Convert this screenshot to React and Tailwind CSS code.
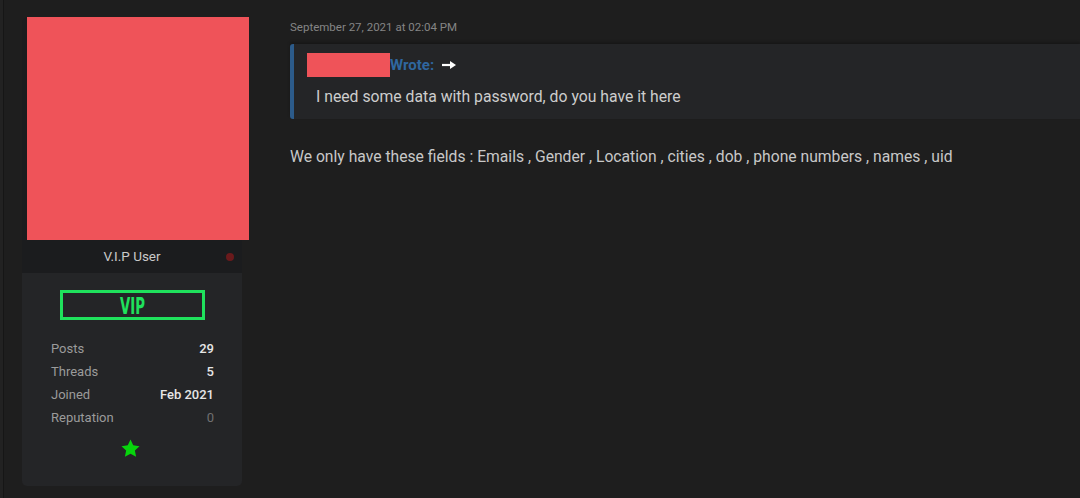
import React from 'react'

const stats = [
  { label: 'Posts', value: '29' },
  { label: 'Threads', value: '5' },
  { label: 'Joined', value: 'Feb 2021' },
  { label: 'Reputation', value: '0', muted: true },
]

function UserCard() {
  return (
    <aside className="mt-[17px] ml-[18px] w-[220px] h-[469px] flex flex-col shrink-0">
      <div className="bg-[#1b1c1e] rounded-tl-[6px]">
        <div className="ml-[5px] w-[222px] h-[223px] bg-[#ef5359]" />
        <div className="h-[33px] flex items-center justify-center relative text-[13.5px] text-[#c9c9c9]">
          V.I.P User
          <span className="absolute right-[8px] top-[13px] w-[8px] h-[8px] rounded-full bg-[#6a1a1c]" />
        </div>
      </div>
      <div className="flex-1 bg-[#242527] rounded-b-[5px] pt-[17px] flex flex-col items-center">
        <div className="w-[145px] h-[30px] border-[3px] border-[#1fe25c] flex items-center justify-center overflow-hidden">
          <span className="text-[#1fe25c] text-[23px] font-bold leading-[20px] mt-[1px] scale-x-[0.64] font-['DejaVu_Sans_Condensed','Roboto',sans-serif]">VIP</span>
        </div>
        <div className="w-full pl-[29px] pr-[28px] mt-[17px] flex flex-col">
          {stats.map((s) => (
            <div key={s.label} className="h-[23px] flex items-center justify-between text-[13px]">
              <span className="text-[#9b9b9b]">{s.label}</span>
              <span className={s.muted ? 'text-[#707070]' : 'text-[#e6e6e6] font-medium'}>{s.value}</span>
            </div>
          ))}
        </div>
        <svg className="mt-[9px] mr-[3px]" width="21" height="21" viewBox="0 0 24 24">
          <path fill="#07d40c" d="M12 1.8l3.1 6.6 7.2.9-5.3 5 1.4 7.2L12 18l-6.4 3.5 1.4-7.2-5.3-5 7.2-.9z" />
        </svg>
      </div>
    </aside>
  )
}

function Post() {
  return (
    <main className="ml-[48px] flex-1 min-w-0">
      <div className="mt-[20px] text-[11.5px] leading-[14px] text-[#858585]">September 27, 2021 at 02:04 PM</div>
      <div className="mt-[10px] h-[75px] bg-[#242527] border-l-[4px] border-[#2c5b8a] rounded-l-[3px] shadow-[0_-2px_3px_rgba(0,0,0,0.25)] pl-[13px] pt-[9px]">
        <div className="flex items-center h-[24px]">
          <span className="w-[83px] h-[24px] bg-[#ef5359]" />
          <span className="text-[15px] font-bold text-[#2f679f]">Wrote:</span>
          <svg className="ml-[8px]" width="14" height="10" viewBox="0 0 14 10">
            <path d="M0 5h9" stroke="#ffffff" strokeWidth="2.2" />
            <path d="M8 1l6 4-6 4z" fill="#ffffff" />
          </svg>
        </div>
        <div className="mt-[8px] ml-[9px] text-[15.75px] text-[#cdcdcd]">I need some data with password, do you have it here</div>
      </div>
      <p className="mt-[26px] text-[15.7px] text-[#c8c8c8]">
        We only have these fields : Emails , Gender , Location , cities , dob , phone numbers , names , uid
      </p>
    </main>
  )
}

export default function App() {
  return (
    <div className="w-[1080px] h-[498px] bg-[#1e1e1e] flex overflow-hidden font-['Roboto',sans-serif]">
      <div className="w-[4px] h-full bg-[#222222] border-r border-[#161616] shrink-0" />
      <UserCard />
      <Post />
    </div>
  )
}
